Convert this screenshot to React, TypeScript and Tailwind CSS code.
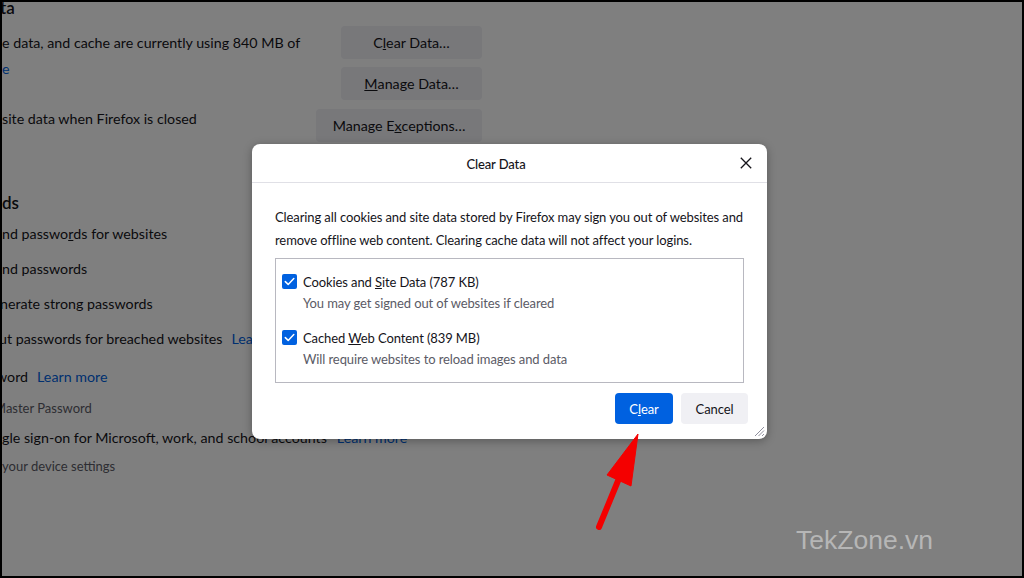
import React from "react";

function BgBtn({ w, children, className = "" }: { w: string; children: React.ReactNode; className?: string }) {
  return (
    <div className={`${w} h-[33px] rounded-[4px] bg-[#f0f0f4] flex items-center justify-center text-[14.25px] ${className}`}>
      {children}
    </div>
  );
}

function Check() {
  return (
    <div className="w-[15px] h-[15px] rounded-[2px] bg-[#0061e0] flex items-center justify-center shrink-0">
      <svg width="15" height="15" viewBox="0 0 15 15">
        <path d="M3.3 7.6 L6.2 10.4 L11.8 4.6" fill="none" stroke="#fff" strokeWidth="1.5" strokeLinecap="round" strokeLinejoin="round" />
      </svg>
    </div>
  );
}

export default function App() {
  return (
    <div className="w-[1024px] h-[578px] bg-black p-[2px] font-['Lato',sans-serif]">
      <div className="relative w-[1020px] h-[574px] overflow-hidden bg-white text-[#15141a]">
        {/* background settings page */}
        <div className="flex flex-col w-[480px] text-[14.25px]">
          <div className="mt-[-3px] ml-[-2px] h-[18px] flex items-center text-[17px] font-semibold">ta</div>
          <div className="mt-[9px] flex justify-between">
            <div className="flex flex-col">
              <p className="pt-[4px] leading-[26px] whitespace-nowrap">
                e data, and cache are currently using 840 MB of
                <br />
                <span className="text-[#0061e0]">e</span>
              </p>
              <p className="mt-[26px] leading-[22px] whitespace-nowrap">site data when Firefox is closed</p>
            </div>
            <div className="flex flex-col items-end gap-[8px]">
              <BgBtn w="w-[141px]">
                C<u>l</u>ear Data…
              </BgBtn>
              <BgBtn w="w-[141px]">
                <u>M</u>anage Data…
              </BgBtn>
              <BgBtn w="w-[166px]" className="mt-[1px]">
                Manage E<u>x</u>ceptions…
              </BgBtn>
            </div>
          </div>
          <div className="mt-[47px] h-[27px] flex items-center text-[17px] font-semibold">ds</div>
          <div className="h-[35px] flex items-center whitespace-nowrap">
            nd passwo<u>r</u>ds for websites
          </div>
          <div className="h-[35px] flex items-center whitespace-nowrap">nd passwords</div>
          <div className="h-[35px] flex items-center whitespace-nowrap ml-[-2px]">nerate strong passwords</div>
          <div className="h-[35px] flex items-center whitespace-nowrap ml-[-3px]">
            ut passwords for breached websites
            <span className="ml-[9px] text-[#0061e0]">Learn more</span>
          </div>
          <div className="h-[42px] flex items-center whitespace-nowrap ml-[-6px]">
            word
            <span className="ml-[9px] text-[#0061e0]">Learn more</span>
          </div>
          <div className="h-[22px] flex items-center whitespace-nowrap ml-[-8px] text-[13px] text-[#5b5b66]">Master Password</div>
          <div className="h-[36px] flex items-center whitespace-nowrap">
            gle sign-on for Microsoft, work, and school accounts
            <span className="ml-[10px] text-[#0061e0]">Learn more</span>
          </div>
          <div className="h-[22px] flex items-center whitespace-nowrap text-[13px] text-[#5b5b66]">your device settings</div>
        </div>

        {/* modal overlay */}
        <div className="absolute inset-0 bg-black/50" />

        {/* dialog */}
        <div className="absolute left-[250px] top-[142px] w-[515px] h-[295px] bg-white rounded-[8px] shadow-[0_2px_10px_rgba(0,0,0,0.3)] flex flex-col text-[13px] tracking-[-0.1px]">
          <div className="h-[39px] border-b border-[#e0e0e6] flex items-center">
            <div className="flex-1 text-center font-medium pt-[4px]">Clear Data</div>
            <svg width="12" height="12" viewBox="0 0 12 12" className="mr-[15px]">
              <path d="M0.8 0.8 L11.2 11.2 M11.2 0.8 L0.8 11.2" stroke="#15141a" strokeWidth="1.3" />
            </svg>
          </div>
          <div className="px-[23px] pt-[22px]">
            <p className="pt-[1px] leading-[23px] whitespace-nowrap">
              Clearing all cookies and site data stored by Firefox may sign you out of websites and
              <br />
              remove offline web content. Clearing cache data will not affect your logins.
            </p>
            <div className="mt-[6px] h-[125px] border border-[#b8b8c0] pl-[6px] pt-[12px]">
              <div className="flex items-center h-[21px] gap-[6px]">
                <Check />
                <span className="mt-[2px]">
                  Cookies and <u>S</u>ite Data (787 KB)
                </span>
              </div>
              <div className="h-[21px] leading-[21px] pt-[1px] pl-[21px] text-[#5b5b66]">You may get signed out of websites if cleared</div>
              <div className="mt-[14px] flex items-center h-[21px] gap-[6px]">
                <Check />
                <span className="mt-[2px]">
                  Cached <u>W</u>eb Content (839 MB)
                </span>
              </div>
              <div className="h-[21px] leading-[21px] pt-[1px] pl-[21px] text-[#5b5b66]">Will require websites to reload images and data</div>
            </div>
          </div>
          <div className="mt-[10px] flex justify-end gap-[8px] pr-[19px]">
            <div className="w-[58px] h-[31px] pt-[2px] rounded-[4px] bg-[#0061e0] text-white flex items-center justify-center">
              C<u>l</u>ear
            </div>
            <div className="w-[67px] h-[31px] pt-[2px] rounded-[4px] bg-[#f0f0f4] flex items-center justify-center">Cancel</div>
          </div>
          <svg width="11" height="11" viewBox="0 0 11 11" className="absolute right-[2px] bottom-[2px]">
            <path d="M10 1 L1 10 M10 4.5 L4.5 10 M10 8 L8 10" stroke="#8f8f9d" strokeWidth="1" />
          </svg>
        </div>

        {/* watermark */}
        <div className="absolute left-[794px] top-[523px] leading-[30px] text-[26.5px] text-[#b6b6b6] font-['Liberation_Sans',Arial,sans-serif]">
          TekZone.vn
        </div>

        {/* red arrow annotation */}
        <svg className="absolute inset-0" width="1020" height="574" viewBox="2 2 1020 574">
          <path d="M599 527 L620 476" stroke="#f40000" strokeWidth="6" strokeLinecap="round" />
          <path d="M638 434 L607 475 L631 486 Z" fill="#f40000" stroke="#f40000" strokeWidth="1" strokeLinejoin="round" />
        </svg>
      </div>
    </div>
  );
}
